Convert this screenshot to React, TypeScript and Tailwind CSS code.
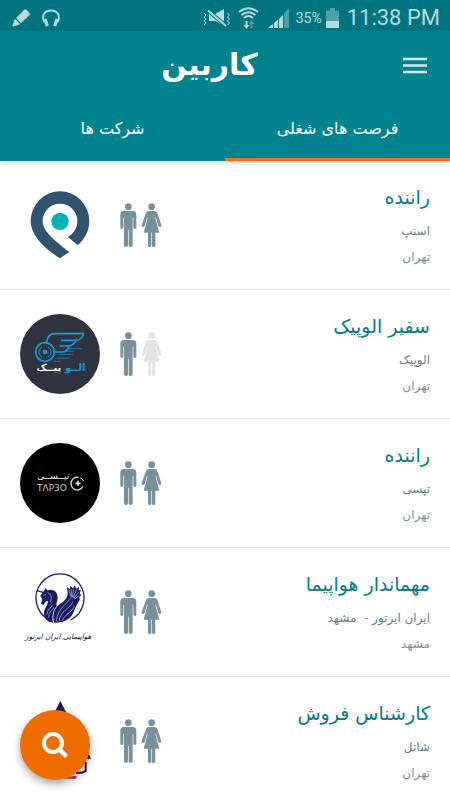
import React, { useState } from 'react';

type Tab = 'jobs' | 'companies';

interface Job {
  id: number;
  title: string;
  company: string;
  city: string;
  women: boolean;
  logo: React.ReactNode;
}

const SnappLogo = () => (
  <svg viewBox="60 45 240 240" className="w-20 h-20" aria-hidden="true">
    <path
      d="M208 246 L180 265 C150 247 92 203 92 153 A88 89 0 1 1 268 153 C268 184 253 208 233 226 L204 201 C222 190 232 173 232 153 A52 52 0 1 0 128 153 C128 184 164 212 208 246 Z"
      fill="#30546f"
    />
    <circle cx="180" cy="154" r="26" fill="#00b3b4" />
  </svg>
);

const AlopeykLogo = () => (
  <svg viewBox="60 42 240 240" className="w-20 h-20" aria-hidden="true">
    <circle cx="180" cy="162" r="120" fill="#2d3440" />
    <g fill="none" stroke="#1a9cd8" strokeWidth="5" strokeLinejoin="round">
      <circle cx="135" cy="156" r="28" />
      <path d="M126 141 a17 17 0 0 0 0 30 M144 141 a17 17 0 0 1 0 30" strokeWidth="3" />
      <path d="M140 127 C142 112 149 101 165 101 H251 C248 114 240 121 226 121 H182" />
      <path d="M228 121 C224 132 216 138 204 138 H179" />
      <path d="M207 138 C204 150 197 156 187 156 H165" />
      <path d="M204 146 H246 M194 154 H222 M178 163 H218 M170 175 H208 M162 184 H182" strokeWidth="2" />
    </g>
    <circle cx="135" cy="156" r="7" fill="#1a9cd8" />
    <text x="256" y="214" direction="rtl" fontFamily="DejaVu Sans, sans-serif" fontWeight="bold" fontSize="30" fill="#1a9cd8">
      الــو
    </text>
    <text x="184" y="214" direction="rtl" fontFamily="DejaVu Sans, sans-serif" fontWeight="bold" fontSize="30" fill="#fff">
      پیــک
    </text>
  </svg>
);

const TapsiLogo = () => (
  <svg viewBox="60 37 240 240" className="w-20 h-20" aria-hidden="true">
    <circle cx="180" cy="157" r="120" fill="#000" />
    <text x="208" y="146" direction="rtl" fontFamily="DejaVu Sans, sans-serif" fontSize="28" fill="#eee">
      تپــســی
    </text>
    <text x="111" y="181" direction="ltr" fontFamily="DejaVu Sans, sans-serif" fontSize="27" fill="#ccc">
      TΛP3O
    </text>
    <g fill="none" stroke="#ddd" strokeWidth="4">
      <path d="M235 140 A19 19 0 1 0 249 167" />
      <path d="M240 141 A19 19 0 0 1 251 151" strokeWidth="3" />
      <path d="M234 150 V166 M226 158 H242" strokeWidth="5" />
    </g>
  </svg>
);

const IranAirtourLogo = () => (
  <svg viewBox="60 35 240 240" className="w-20 h-20" aria-hidden="true">
    <g fill="none" stroke="#1a1d62">
      <path d="M148 179 A72 73 0 1 1 212 179" strokeWidth="4" />
      <path d="M110 91 L132 97" strokeWidth="4" />
    </g>
    <path
      d="M129 96 L137 83 L142 90 C160 84 173 95 173 112 C173 122 167 130 170 137 C159 150 155 168 159 187 C145 186 133 178 132 162 C131 145 143 137 144 122 L136 124 L131 134 L123 130 L127 117 L121 106 Z"
      fill="#1a1d62"
    />
    <path
      d="M130 105 L138 103 M143 97 C154 101 156 112 151 124 M140 163 C142 151 149 142 158 136 M145 172 C147 159 152 149 162 142"
      fill="none"
      stroke="#fff"
      strokeWidth="1.500"
    />
    <path
      d="M162 187 C157 164 162 146 178 132 C194 121 207 112 202 88 L201 81 L210 86 L211 76 L219 84 L224 75 L229 85 L237 79 L236 90 L243 90 L239 99 L244 105 L238 110 L239 119 C231 131 227 141 221 155 C212 178 190 188 162 187 Z"
      fill="#1a1d62"
    />
    <path
      d="M207 89 L213 110 M213 86 L215 110 M221 86 L217 111 M230 88 L219 112 M236 96 L221 114 M238 106 L222 117 M212 112 C205 130 173 140 169 183 M219 124 C209 145 181 152 177 183 M223 138 C214 158 192 163 187 181"
      fill="none"
      stroke="#fff"
      strokeWidth="1.500"
    />
    <text x="274" y="236" direction="rtl" fontFamily="DejaVu Sans, sans-serif" fontSize="22" fontStyle="italic" fill="#0c0c1c">
      هواپیمایی ایران ایرتور
    </text>
  </svg>
);

const ShatelLogo = () => (
  <svg viewBox="60 77 240 240" className="w-20 h-20" aria-hidden="true">
    <path d="M181 77 L198 110 H164 Z" fill="#1a1760" />
    <path d="M265 234 L273 250 H258 Z" fill="#1a1760" />
    <path d="M228 292 H246 L257 287 V260" fill="none" stroke="#1a1760" strokeWidth="6" />
    <path d="M232 282 L246 272" stroke="#1a1760" strokeWidth="4" />
    <path d="M190 309 L222 302 L232 304 L226 311 Z" fill="#d8352c" />
  </svg>
);

const People = ({ women }: { women: boolean }) => (
  <svg viewBox="359 98 126 132" className="h-11 w-[42px] shrink-0" fill="#78909c" role="img" aria-label={women ? 'آقا و خانم' : 'آقا'}>
    <circle cx="384" cy="109" r="10" />
    <path d="M370 122 H398 Q408 122 408 134 V171 Q408 176 404 176 Q399 176 399 171 V142 H397 V225 Q397 230 391 230 Q385 230 385 225 V178 H383 V225 Q383 230 377 230 Q371 230 371 225 V142 H369 V171 Q369 176 364 176 Q360 176 360 171 V134 Q360 122 370 122 Z" />
    <g fill={women ? '#78909c' : '#e4e4e4'}>
      <circle cx="454" cy="109" r="10" />
      <path d="M445 122 H463 Q470 122 472 130 L483 164 Q484 169 480 170 Q477 171 474 167 L467 142 H465 L477 187 H465 V226 Q465 230 460 230 Q455 230 455 226 V187 H453 V226 Q453 230 448 230 Q443 230 443 226 V187 H430 L442 142 H440 L433 167 Q430 171 427 170 Q423 169 424 164 L436 130 Q438 122 445 122 Z" />
    </g>
  </svg>
);

const jobs: Job[] = [
  { id: 1, title: 'راننده', company: 'اسنپ', city: 'تهران', women: true, logo: <SnappLogo /> },
  { id: 2, title: 'سفیر الوپیک', company: 'الوپیک', city: 'تهران', women: false, logo: <AlopeykLogo /> },
  { id: 3, title: 'راننده', company: 'تپسی', city: 'تهران', women: true, logo: <TapsiLogo /> },
  { id: 4, title: 'مهماندار هواپیما', company: 'ایران ایرتور -  مشهد', city: 'مشهد', women: true, logo: <IranAirtourLogo /> },
  { id: 5, title: 'کارشناس فروش', company: 'شاتل', city: 'تهران', women: true, logo: <ShatelLogo /> },
];

const StatusBar = () => (
  <div dir="ltr" className="flex h-[31px] items-center justify-between bg-[#00757f] pt-1 pr-2.5 pl-3 font-[Roboto,sans-serif] text-[#b8dadd]">
    <div className="flex items-center gap-3">
      <svg viewBox="0 0 18 18" className="h-[18px] w-[18px]" fill="currentColor" aria-hidden="true">
        <path d="M12.500 .500 Q13.500 -.200 14.500 .800 L17.500 4 Q18.300 5 17.500 6 L9 14.200 L4 9 Z M3.200 10 L8 15 L6.500 16 L1 17.600 Q.400 17.600 .600 17 L2 11.500 Z" />
      </svg>
      <svg viewBox="0 0 18 18" className="h-[18px] w-[18px]" fill="currentColor" aria-hidden="true">
        <path d="M2.300 13 C-1 6 3 1.500 9 1.500 C15 1.500 19 6 15.700 13" fill="none" stroke="currentColor" strokeWidth="1.800" />
        <path d="M1.300 10.500 L4.500 9.500 L6.800 16.500 L3.800 17.500 Z M16.700 10.500 L13.500 9.500 L11.200 16.500 L14.200 17.500 Z" />
      </svg>
    </div>
    <div className="flex items-center">
      <svg viewBox="0 0 30 20" className="mr-1.5 h-5 w-[30px]" aria-hidden="true">
        <path d="M2 5 L4 7 L2 9 L4 11 L2 13 L4 15 L2 17" fill="none" stroke="currentColor" />
        <path d="M7 6 H13 L22 1 V17.500 L13 13 H7 Z" fill="currentColor" />
        <path d="M6 2.500 L24 18" stroke="#00757f" strokeWidth="4" />
        <path d="M6 2.500 L24 18" stroke="currentColor" strokeWidth="2" />
        <path d="M25.500 5 L27.500 7 L25.500 9 L27.500 11 L25.500 13 L27.500 15 L25.500 17" fill="none" stroke="currentColor" />
      </svg>
      <svg viewBox="0 0 21 24" className="mr-2.5 h-6 w-[21px]" fill="none" stroke="currentColor" strokeWidth="2" aria-hidden="true">
        <path d="M1 6 Q10.500 -1.500 20 6 M3.500 9 Q10.500 3.500 17.500 9 M6 12 Q10.500 8 15 12" />
        <path d="M8.500 15 V20" />
        <path d="M5.500 19 H11.500 L8.500 23 Z" fill="currentColor" stroke="none" />
        <path d="M13.500 16.500 V22" stroke="#4f9fa6" />
        <path d="M10.500 18 H16.500 L13.500 14 Z" fill="#4f9fa6" stroke="none" />
      </svg>
      <svg viewBox="0 0 20 20" className="mr-[7px] h-5 w-5" fill="currentColor" aria-hidden="true">
        <path d="M0 20 V19 L4 16 V20 Z M5 20 V15 L9 11.500 V20 Z M10 20 V11 L14 7 V20 Z" />
        <path d="M15 20 V5.500 L20 0 V20 Z" fill="#4f9fa6" />
      </svg>
      <span className="mr-1 text-sm">35%</span>
      <svg viewBox="0 0 13 20" className="mr-2 h-5 w-[13px]" aria-hidden="true">
        <path d="M4 0 H9 V2.500 H13 V20 H0 V2.500 H4 Z" fill="#4f9fa6" />
        <path d="M0 13 H13 V20 H0 Z" fill="currentColor" />
      </svg>
      <span className="text-[22px] leading-6">11:38 PM</span>
    </div>
  </div>
);

const App: React.FC = () => {
  const [tab, setTab] = useState<Tab>('jobs');

  const tabClass = 'flex h-[62px] flex-1 items-center justify-center border-b-[3px] text-base';

  return (
    <div dir="rtl" lang="fa" className="relative flex h-screen flex-col bg-white font-['DejaVu_Sans',sans-serif]">
      <header className="relative z-10 bg-[#00838f] text-white shadow-md">
        <StatusBar />
        <div className="flex h-[68px] items-center pr-[23px] pl-4">
          <button type="button" aria-label="منو" className="shrink-0">
            <svg viewBox="0 0 24 24" className="h-6 w-6" stroke="#d5eaec" strokeWidth="2.500" aria-hidden="true">
              <path d="M0 6 H24 M0 12.500 H24 M0 19 H24" />
            </svg>
          </button>
          <h1 className="flex-1 text-center text-[30px] leading-10 font-bold">کاربین</h1>
        </div>
        <div className="flex" role="tablist">
          <button
            type="button"
            role="tab"
            aria-selected={tab === 'jobs'}
            onClick={() => setTab('jobs')}
            className={`${tabClass} ${tab === 'jobs' ? 'border-[#ff6f0f]' : 'border-transparent'}`}
          >
            فرصت های شغلی
          </button>
          <button
            type="button"
            role="tab"
            aria-selected={tab === 'companies'}
            onClick={() => setTab('companies')}
            className={`${tabClass} ${tab === 'companies' ? 'border-[#ff6f0f]' : 'border-transparent'}`}
          >
            شرکت ها
          </button>
        </div>
      </header>

      <main className="min-h-0 flex-1 overflow-y-auto [scrollbar-width:none]">
        <ul>
          {jobs.map((job) => (
            <li key={job.id} className="border-b border-[#e4e4e4]">
              <a href="#" className="flex h-32 items-center gap-5 px-5">
                <div className="flex-1 pb-1">
                  <h2 className="text-[19px] leading-9 text-[#007a87]">{job.title}</h2>
                  <p className="text-xs leading-8 whitespace-pre text-[#607d8b]">{job.company}</p>
                  <p className="text-xs leading-5 text-[#78909c]">{job.city}</p>
                </div>
                <People women={job.women} />
                {job.logo}
              </a>
            </li>
          ))}
        </ul>
      </main>

      <button
        type="button"
        aria-label="جستجو"
        className="absolute bottom-5 left-5 z-20 flex h-[70px] w-[70px] items-center justify-center rounded-full bg-[#ef6c00] shadow-[0_4px_8px_rgba(0,0,0,0.35)]"
      >
        <svg viewBox="0 0 28 28" className="h-7 w-7" fill="none" stroke="#fff" aria-hidden="true">
          <circle cx="12" cy="12" r="9" strokeWidth="4" />
          <path d="M18 18 L25.500 25.500" strokeWidth="4.500" />
        </svg>
      </button>
    </div>
  );
};

export default App;
